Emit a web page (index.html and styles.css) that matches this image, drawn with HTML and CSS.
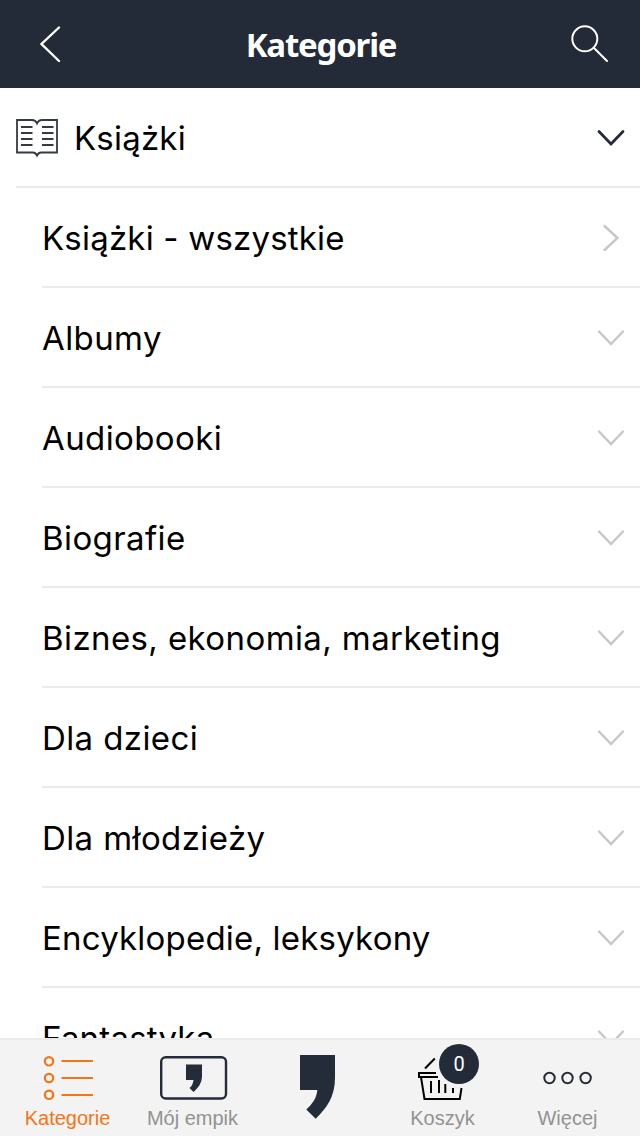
FILE: index.html
```html
<!DOCTYPE html>
<html lang="pl">
<head>
<meta charset="utf-8">
<title>Kategorie</title>
<link rel="stylesheet" href="styles.css">
</head>
<body>
<svg class="defs" width="0" height="0" aria-hidden="true">
  <symbol id="down" viewBox="0 0 28 18"><path d="M2 2.5 14 15 26 2.5"/></symbol>
  <symbol id="right" viewBox="0 0 18 28"><path d="M2.5 2 15.5 14 2.5 26"/></symbol>
</svg>
<div class="screen">
  <header class="topbar">
    <svg class="back" width="24" height="40" viewBox="38 24 24 40"><path d="M59 27.500 41.500 44 59 61"/></svg>
    <h1 class="title">Kategorie</h1>
    <svg class="search" width="40" height="40" viewBox="570 24 40 40"><circle cx="584.800" cy="38.800" r="12.500"/><path d="M594 48 607 61"/></svg>
  </header>
  <main class="list">
    <div class="row parent">
      <svg class="book" width="44" height="40" viewBox="15 118 44 40"><path d="M37 123.500Q35.500 120 32 120H17V152.500H33Q35.500 152.500 37 155.500Q38.500 152.500 41 152.500H57V120H42Q38.500 120 37 123.500Z"/><path d="M21 127h11.500M21 133h11.500M21 139h11.500M21 145h11.500M42 127h11.500M42 133h11.500M42 139h11.500M42 145h11.500"/></svg>
      <span class="name tight">Książki</span>
      <svg class="chevron dark" width="28" height="18"><use href="#down"/></svg>
    </div>
    <div class="row"><span class="name tight">Książki - wszystkie</span><svg class="chevron next" width="18" height="28"><use href="#right"/></svg></div>
    <div class="row"><span class="name">Albumy</span><svg class="chevron" width="28" height="18"><use href="#down"/></svg></div>
    <div class="row"><span class="name">Audiobooki</span><svg class="chevron" width="28" height="18"><use href="#down"/></svg></div>
    <div class="row"><span class="name">Biografie</span><svg class="chevron" width="28" height="18"><use href="#down"/></svg></div>
    <div class="row"><span class="name">Biznes, ekonomia, marketing</span><svg class="chevron" width="28" height="18"><use href="#down"/></svg></div>
    <div class="row"><span class="name">Dla dzieci</span><svg class="chevron" width="28" height="18"><use href="#down"/></svg></div>
    <div class="row"><span class="name">Dla młodzieży</span><svg class="chevron" width="28" height="18"><use href="#down"/></svg></div>
    <div class="row"><span class="name tight">Encyklopedie, leksykony</span><svg class="chevron" width="28" height="18"><use href="#down"/></svg></div>
    <div class="row"><span class="name tight">Fantastyka</span><svg class="chevron" width="28" height="18"><use href="#down"/></svg></div>
  </main>
  <nav class="tabs">
    <div class="tab active">
      <svg width="125" height="66" viewBox="5 1040 125 66"><g fill="none" stroke="#f47514" stroke-width="2.200"><circle cx="49" cy="1061.300" r="4.200"/><circle cx="49" cy="1078" r="4.200"/><circle cx="49" cy="1094.800" r="4.200"/><path d="M61.500 1061H93M61.500 1078H93M61.500 1095H93"/></g></svg>
      <span class="label">Kategorie</span>
    </div>
    <div class="tab">
      <svg width="125" height="66" viewBox="130 1040 125 66"><rect x="161.200" y="1057.200" width="64.800" height="41.300" rx="4.500" fill="none" stroke="#252c39" stroke-width="2.400"/><path fill="#252c39" d="M186 1064.500H202V1076C202 1083 198 1088 193.500 1092L189.500 1088Q193 1085 193.500 1080H186Z"/></svg>
      <span class="label">Mój empik</span>
    </div>
    <div class="tab">
      <svg width="125" height="79" viewBox="255 1040 125 79"><path fill="#252c39" d="M300 1055H335V1078C335 1097 326.500 1108 315.700 1118.700L306.300 1109.500C312 1104 316.500 1099 317.300 1090H300Z"/></svg>
    </div>
    <div class="tab">
      <svg width="125" height="66" viewBox="380 1040 125 66"><g fill="none" stroke="#000" stroke-width="2"><path d="M425 1068.500 434.800 1058.500M436 1073H419V1077H438M421 1077 424.500 1099H459.800L461.500 1088M431 1081V1093M439 1080V1093M445.300 1084V1093M453 1088V1093"/></g></svg>
      <span class="label">Koszyk</span>
      <span class="badge">0</span>
    </div>
    <div class="tab">
      <svg width="125" height="66" viewBox="505 1040 125 66"><g fill="none" stroke="#252c39" stroke-width="2"><circle cx="549.500" cy="1078" r="5.200"/><circle cx="567.500" cy="1078" r="5.200"/><circle cx="585.600" cy="1078" r="5.200"/></g></svg>
      <span class="label">Więcej</span>
    </div>
  </nav>
</div>
</body>
</html>
```
FILE: styles.css
```css
* { box-sizing: border-box; }
body { margin: 0; background: #fff; }
.defs { position: absolute; }
.screen {
  width: 640px;
  height: 1136px;
  display: flex;
  flex-direction: column;
  overflow: hidden;
  background: #fff;
}
.topbar {
  flex: 0 0 88px;
  display: flex;
  align-items: center;
  justify-content: space-between;
  padding: 0 30px 0 38px;
  background: #242b38;
}
.topbar svg { fill: none; stroke: #fff; stroke-linecap: round; }
.back { stroke-width: 2.4; margin-right: 10px; }
.search { stroke-width: 2; }
.title {
  margin: 0;
  padding-top: 2px;
  color: #fff;
  font: 700 33px/44px "Noto Sans", sans-serif;
  letter-spacing: -1.2px;
}
.list { flex: 1 1 0; min-height: 0; overflow: hidden; }
.row {
  height: 100px;
  margin-left: 42px;
  padding-right: 15px;
  border-bottom: 2px solid #ebebec;
  display: flex;
  align-items: center;
}
.parent { margin-left: 16px; }
.book {
  margin: 2px 15px 0 -1px;
  fill: none;
  stroke: #343943;
  stroke-width: 1.8;
}
.name {
  flex: 1;
  color: #000;
  font: 400 33px/44px Inter, sans-serif;
  letter-spacing: 0.4px;
  white-space: nowrap;
  padding-top: 2px;
}
.tight { letter-spacing: 0.2px; }
.chevron {
  margin-top: 2px;
  fill: none;
  stroke: #c7c7c7;
  stroke-width: 2.4;
  stroke-linecap: round;
}
.chevron.dark { stroke: #242b38; stroke-width: 2.8; }
.chevron.next { margin-right: 5px; }
.tabs {
  flex: 0 0 98px;
  display: grid;
  grid-template-columns: repeat(5, 125px);
  padding-left: 5px;
  border-top: 2px solid #ebebeb;
  background: #f3f3f3;
}
.tab {
  position: relative;
  display: flex;
  flex-direction: column;
  align-items: center;
}
.tab svg { display: block; flex: none; }
.label {
  color: #929292;
  font: 400 20px/24px "Liberation Sans", Arial, sans-serif;
}
.active .label { color: #f47514; }
.badge {
  position: absolute;
  left: 59px;
  top: 4px;
  width: 40px;
  height: 40px;
  border-radius: 50%;
  background: #242b38;
  color: #fff;
  font: 400 20px/40px Roboto, sans-serif;
  text-align: center;
}
```
